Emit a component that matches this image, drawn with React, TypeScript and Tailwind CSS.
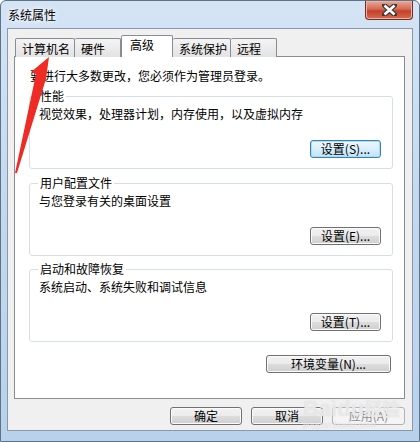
import React from 'react';

const font = "font-['Noto_Sans_CJK_SC','Noto_Sans',sans-serif]";

type BtnProps = { label: string; width: string; focused?: boolean; disabled?: boolean };

const WinButton = ({ label, width, focused, disabled }: BtnProps) => {
    const base = 'h-[18px] rounded-[3px] border text-[12px] leading-[16px] flex items-center justify-center';
    if (disabled) {
        return <div className={`${base} ${width} border-[#adb2b5] bg-[#f4f4f4] text-[#8d8d8d]`}>{label}</div>;
    }
    if (focused) {
        return (
            <div className={`${base} ${width} border-[#3c7fb1] bg-gradient-to-b from-[#edf7fd] via-[#d9effb] to-[#bfe3f7] text-black shadow-[inset_0_0_0_1px_#a8dcf7]`}>
                {label}
            </div>
        );
    }
    return (
        <div className={`${base} ${width} border-[#707070] bg-[linear-gradient(#f2f2f2,#ebebeb_50%,#dddddd_50%,#cfcfcf)] text-black shadow-[inset_0_0_0_1px_#fbfbfb]`}>
            {label}
        </div>
    );
};

const Group = ({ title, text, button, focused, mt }: { title: string; text: string; button: string; focused?: boolean; mt: string }) => (
    <fieldset className={`ml-[14px] w-[364px] rounded-[3px] border border-[#d5dfe5] ${mt} pb-[10px]`}>
        <legend className="ml-[8px] px-[2px] text-[12px] leading-[16px]">{title}</legend>
        <p className="pl-[9px] mt-[2px] text-[12px] leading-[16px]">{text}</p>
        <div className="flex justify-end pr-[11px] mt-[18px]">
            <WinButton label={button} width="w-[71px]" focused={focused} />
        </div>
    </fieldset>
);

const tabBase = 'border border-b-0 border-[#898c95] rounded-t-[2px] text-[12px] leading-[16px] pl-[6px]';
const tabIdle = `${tabBase} h-[19px] pt-[2px] bg-gradient-to-b from-[#f4f4f4] to-[#e3e3e3]`;

export default function App() {
    return (
        <div className={`relative w-[420px] h-[442px] overflow-hidden flex flex-col rounded-t-[6px] border border-[#5d7389] bg-gradient-to-b from-[#d4e4f5] via-[#c3d8ee] to-[#b8d2ec] ${font} text-black`}>
            {/* title bar */}
            <div className="h-[27px] flex justify-between items-start shrink-0">
                <span className="pl-[7px] pt-[6px] text-[12px] leading-[16px] [text-shadow:0_0_6px_#fff,0_0_3px_#fff]">系统属性</span>
                <div className="mr-[6px] w-[48px] h-[19px] rounded-b-[4px] border border-t-0 border-[#6d2f25] bg-[linear-gradient(#e9a899,#d46a55_45%,#c2402a_55%,#d76a4e)] flex items-center justify-center shadow-[inset_0_0_0_1px_#efb3a4]">
                    <svg width="15" height="12" viewBox="0 0 15 12">
                        <path d="M2 1 L13 11 M13 1 L2 11" stroke="#3a3a3a" strokeWidth="5" strokeLinecap="square" />
                        <path d="M2.5 1.5 L12.5 10.5 M12.5 1.5 L2.5 10.5" stroke="#ffffff" strokeWidth="2.6" />
                    </svg>
                </div>
            </div>

            {/* dialog body */}
            <div className="mx-[6px] h-[403px] border border-[#8999a9] bg-[#f0f0f0] flex flex-col">
                {/* tabs */}
                <div className="relative z-10 flex items-end h-[21px] mt-[7px] -mb-[1px] pl-[7px]">
                    <div className={`${tabIdle} w-[60px]`}>计算机名</div>
                    <div className={`${tabIdle} w-[46px] border-l-0`}>硬件</div>
                    <div className={`${tabBase} h-[22px] w-[52px] pt-[1px] pl-[8px] bg-white`}>高级</div>
                    <div className={`${tabIdle} w-[58px] border-l-0`}>系统保护</div>
                    <div className={`${tabIdle} w-[46px] border-l-0`}>远程</div>
                </div>

                {/* panel */}
                <div className="ml-[6px] w-[391px] h-[343px] border border-[#898c95] bg-white flex flex-col">
                    <p className="pl-[15px] pt-[11px] text-[12px] leading-[16px]">要进行大多数更改，您必须作为管理员登录。</p>
                    <Group mt="mt-[4px]" title="性能" text="视觉效果，处理器计划，内存使用，以及虚拟内存" button="设置(S)..." focused />
                    <Group mt="mt-[6px]" title="用户配置文件" text="与您登录有关的桌面设置" button="设置(E)..." />
                    <Group mt="mt-[5px]" title="启动和故障恢复" text="系统启动、系统失败和调试信息" button="设置(T)..." />
                    <div className="flex justify-end pr-[13px] mt-[13px]">
                        <WinButton label="环境变量(N)..." width="w-[125px]" />
                    </div>
                </div>

                {/* bottom buttons */}
                <div className="flex justify-end gap-[9px] pr-[7px] mt-[8px]">
                    <WinButton label="确定" width="w-[72px]" />
                    <WinButton label="取消" width="w-[72px]" />
                    <WinButton label="应用(A)" width="w-[73px]" disabled />
                </div>
            </div>

            {/* faint watermark over the corner */}
            <div className="absolute left-[302px] top-[396px] pointer-events-none select-none text-white/50 [text-shadow:0_0_1px_#d0d0d0]">
                <div className="text-[22px] leading-[22px] font-bold font-['Liberation_Sans',sans-serif]">Baidu<span className="text-[18px] font-['Noto_Sans_CJK_SC',sans-serif]">经验</span></div>
                <div className="text-[9px] leading-[11px] font-['Liberation_Sans',sans-serif]">jingyan.baidu.com</div>
            </div>

            {/* red annotation arrow */}
            <svg className="absolute left-0 top-0 pointer-events-none" width="420" height="442">
                <polygon points="48,56 30,71 35,73 14,172 16,172 44,81 45,78" fill="#ee2b24" />
            </svg>
        </div>
    );
}
